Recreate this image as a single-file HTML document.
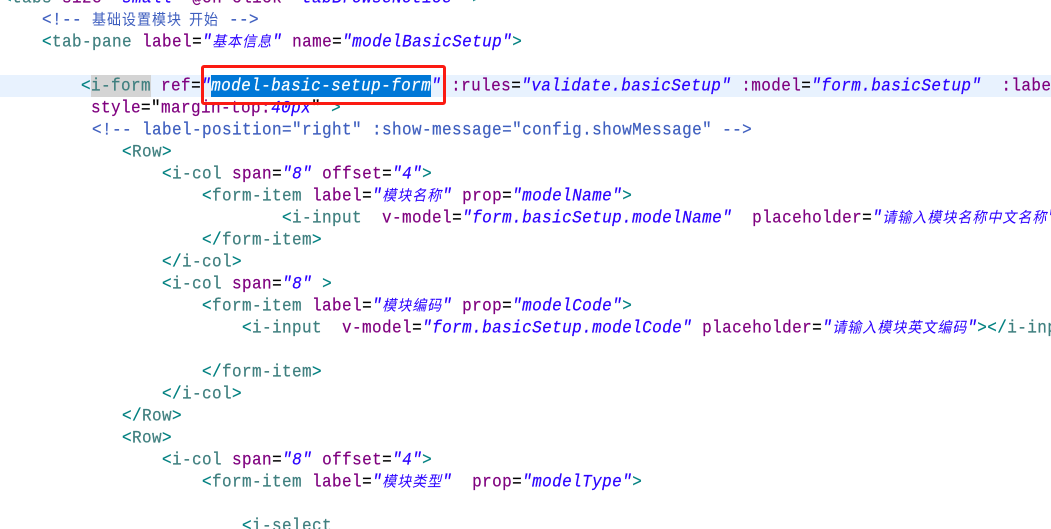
<!DOCTYPE html>
<html lang="zh"><head><meta charset="utf-8"><style>
html,body{margin:0;padding:0;background:#fff;width:1051px;height:529px;overflow:hidden}
#w{position:absolute;left:0;top:0;width:1051px;height:529px;overflow:hidden}
.l{position:absolute;height:22px;line-height:22px;white-space:pre;font-family:"Liberation Mono","Noto Sans CJK SC",monospace;font-size:16px;letter-spacing:.4px;color:#000;transform:scaleY(1.07);-webkit-text-stroke:.2px currentColor}
.t{color:#008080}.n{color:#3f7f7f}.a{color:#7f007f}.v{color:#2a00ff;font-style:italic}.c{color:#3f5fbf}
.z{font-family:"Noto Sans CJK SC",sans-serif;font-size:14px;letter-spacing:1px;-webkit-text-stroke:0}
.bar{position:absolute}
</style></head><body><div id="w">
<div class="bar" style="left:0;top:75px;width:1051px;height:22px;background:#e8f2fe"></div>
<div class="bar" style="left:91px;top:75px;width:60px;height:22px;background:#d4d4d4"></div>
<div class="bar" style="left:211px;top:75px;width:220px;height:22px;background:#0078d7"></div>

<div class="l" style="left:2px;top:-13px"><span class="t">&lt;</span><span class="n">tabs</span> <span class="a">size</span>=<span class="v">"small"</span> <span class="a">@on-click</span>=<span class="v">"tabBrowseNotice"</span> <span class="t">&gt;</span></div>
<div class="l c" style="left:42px;top:8px">&lt;!-- <span class="z">基础设置模块</span><span class="z" style="margin-left:7px">开始</span> --&gt;</div>
<div class="l" style="left:42px;top:30px"><span class="t">&lt;</span><span class="n">tab-pane</span> <span class="a">label</span>=<span class="v">"<span class="z">基本信息</span>"</span> <span class="a">name</span>=<span class="v">"modelBasicSetup"</span><span class="t">&gt;</span></div>
<div class="l" style="left:81px;top:75px"><span class="t">&lt;</span><span class="n">i-form</span> <span class="a">ref</span>=<span class="v">"<span style="color:#fff">model-basic-setup-form</span>"</span> <span class="a">:rules</span>=<span class="v">"validate.basicSetup"</span> <span class="a">:model</span>=<span class="v">"form.basicSetup"</span>  <span class="a">:labe</span></div>
<div class="l" style="left:91px;top:97px"><span class="a">style</span>="<span class="a">margin-top:</span><span class="v">40px</span>"<span class="t"> &gt;</span></div>
<div class="l c" style="left:92px;top:119px">&lt;!-- label-position="right" :show-message="config.showMessage" --&gt;</div>
<div class="l" style="left:122px;top:141px"><span class="t">&lt;</span><span class="n">Row</span><span class="t">&gt;</span></div>
<div class="l" style="left:162px;top:163px"><span class="t">&lt;</span><span class="n">i-col</span> <span class="a">span</span>=<span class="v">"8"</span> <span class="a">offset</span>=<span class="v">"4"</span><span class="t">&gt;</span></div>
<div class="l" style="left:202px;top:184px"><span class="t">&lt;</span><span class="n">form-item</span> <span class="a">label</span>=<span class="v">"<span class="z">模块名称</span>"</span> <span class="a">prop</span>=<span class="v">"modelName"</span><span class="t">&gt;</span></div>
<div class="l" style="left:282px;top:206px;width:769px;overflow:hidden"><span class="t">&lt;</span><span class="n">i-input</span>  <span class="a">v-model</span>=<span class="v">"form.basicSetup.modelName"</span>  <span class="a">placeholder</span>=<span class="v">"<span class="z">请输入模块名称中文名称</span>"</span></div>
<div class="l" style="left:202px;top:229px"><span class="t">&lt;/</span><span class="n">form-item</span><span class="t">&gt;</span></div>
<div class="l" style="left:162px;top:251px"><span class="t">&lt;/</span><span class="n">i-col</span><span class="t">&gt;</span></div>
<div class="l" style="left:162px;top:273px"><span class="t">&lt;</span><span class="n">i-col</span> <span class="a">span</span>=<span class="v">"8"</span> <span class="t">&gt;</span></div>
<div class="l" style="left:202px;top:294px"><span class="t">&lt;</span><span class="n">form-item</span> <span class="a">label</span>=<span class="v">"<span class="z">模块编码</span>"</span> <span class="a">prop</span>=<span class="v">"modelCode"</span><span class="t">&gt;</span></div>
<div class="l" style="left:242px;top:316px;width:809px;overflow:hidden"><span class="t">&lt;</span><span class="n">i-input</span>  <span class="a">v-model</span>=<span class="v">"form.basicSetup.modelCode"</span> <span class="a">placeholder</span>=<span class="v">"<span class="z">请输入模块英文编码</span>"</span><span class="t">&gt;&lt;/</span><span class="n">i-input</span></div>
<div class="l" style="left:202px;top:361px"><span class="t">&lt;/</span><span class="n">form-item</span><span class="t">&gt;</span></div>
<div class="l" style="left:162px;top:383px"><span class="t">&lt;/</span><span class="n">i-col</span><span class="t">&gt;</span></div>
<div class="l" style="left:122px;top:405px"><span class="t">&lt;/</span><span class="n">Row</span><span class="t">&gt;</span></div>
<div class="l" style="left:122px;top:427px"><span class="t">&lt;</span><span class="n">Row</span><span class="t">&gt;</span></div>
<div class="l" style="left:162px;top:449px"><span class="t">&lt;</span><span class="n">i-col</span> <span class="a">span</span>=<span class="v">"8"</span> <span class="a">offset</span>=<span class="v">"4"</span><span class="t">&gt;</span></div>
<div class="l" style="left:202px;top:470px"><span class="t">&lt;</span><span class="n">form-item</span> <span class="a">label</span>=<span class="v">"<span class="z">模块类型</span>"</span>  <span class="a">prop</span>=<span class="v">"modelType"</span><span class="t">&gt;</span></div>
<div class="l" style="left:242px;top:515px"><span class="t">&lt;</span><span class="n">i-select</span></div>

<div class="bar" style="left:201px;top:65px;width:239px;height:34px;border:3px solid #fb1a12;border-radius:3px"></div>
</div></body></html>
